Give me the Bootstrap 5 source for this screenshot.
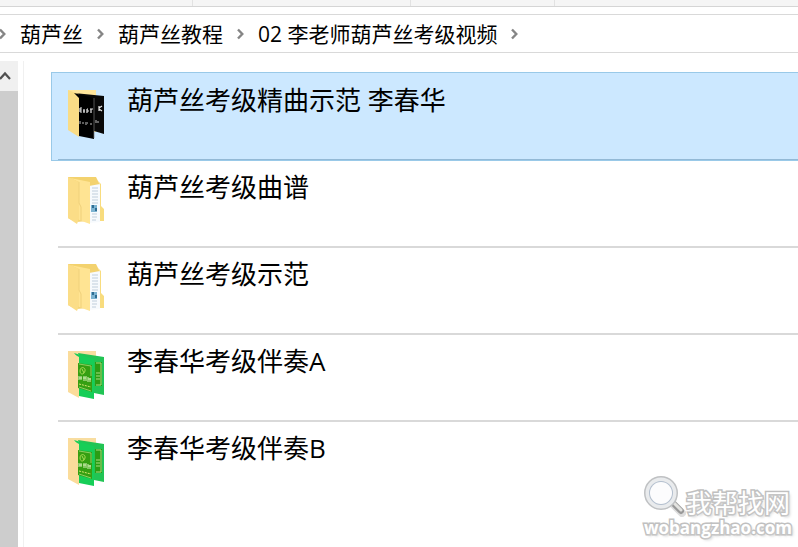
<!DOCTYPE html>
<html lang="zh-CN">
<head>
<meta charset="utf-8">
<meta name="viewport" content="width=device-width, initial-scale=1">
<title>02 李老师葫芦丝考级视频</title>
<link href="https://cdn.jsdelivr.net/npm/bootstrap@5.3.0/dist/css/bootstrap.min.css" rel="stylesheet">
<style>
  body { font-family: "Open Sans", "Noto Sans CJK SC", sans-serif; color: #000; background: #fff; }
  .ribbon { height: 7px; background: #f5f5f5; border-bottom: 1px solid #d5d5d5; }
  .ribbon span { border-right: 1px solid #e2e2e2; }
  .group-a { width: 193px; }
  .group-b { width: 218px; }
  .group-c { width: 144px; }
  .address { margin-top: 7px; height: 39px; gap: 14px; border-top: 1px solid #d9d9d9; border-bottom: 1px solid #d9d9d9; font-size: 21px; line-height: 36px; }
  .address .crumbs { gap: 14px; }
  .address a { color: #000; }
  .scroller { width: 18px; margin-top: 8px; background: #cdcdcd; }
  .scroller button { height: 30px; background: #f0f0f0; }
  .pane-edge { width: 6px; margin-top: 8px; border-right: 1px solid #f0f0f0; }
  .files { margin: 19px 0 0 27px; }
  .entry { padding-left: 7px; }
  .entry-body { height: 87px; padding: 8px 0 0 10px; gap: 21px; border-bottom: 2px solid #d9d9d9; font-size: 26px; line-height: 36px; }
  .entry-body svg { margin-top: 7px; }
  .entry:last-child .entry-body { border-bottom-color: transparent; }
  .entry.selected { background: #cce8ff; border: 1px solid #99c9e8; border-right: 0; padding: 1px 0 0 6px; }
  .entry.selected .entry-body { height: 86px; border-bottom: 1px solid #93b9d6; }
  .brand-mark { right: 6px; bottom: 8px; width: 148px; color: #fff; -webkit-text-stroke: 3px #c0c0c0; paint-order: stroke fill; text-shadow: 2px 2px 3px #ccc; }
  .brand-name { font-family: "Noto Sans CJK SC", sans-serif; font-size: 26px; line-height: 30px; font-weight: 400; }
  .brand-site { font-family: "Open Sans", sans-serif; font-size: 17px; line-height: 22px; font-weight: 700; }
</style>
<script src="https://cdn.jsdelivr.net/npm/bootstrap@5.3.0/dist/js/bootstrap.bundle.min.js"></script>
</head>
<body class="min-vh-100 d-flex flex-column position-relative overflow-hidden">

<svg class="d-none" aria-hidden="true">
  <defs>
    <symbol id="chevron" viewBox="0 0 7 12"><path d="M1 1.5 5.3 6 1 10.5" fill="none" stroke="#858585" stroke-width="2.4"/></symbol>

    <symbol id="folder-black" viewBox="0 0 38 50">
      <path d="M0 1h28v42H12L0 41z" fill="#ffe69c"/>
      <path d="M6 4 36 7v38l-10-3z" fill="#080808"/>
      <path d="M0 1 11 5v43L0 41z" fill="#f9dc86"/>
      <path d="M6 4 26 9v41l-15-3V9z" fill="#000"/>
      <path d="M26 9v40" stroke="#777" stroke-width=".7"/>
      <path d="M12 19v4m0-4h2m-2 2h2m-2 2h2m2-3v4m-1-2h2m2-2v4m0-4h1m-1 2h2m2-2v4m-1-4h3M31 17v5m0-3 3-2m-3 3 3 2" fill="none" stroke="#e8e8e8" stroke-width="1.2"/>
      <path d="M12 32v3m3-2v2m3-2v3m1-2h1m3 0v2m5-5v3m2-2v2" stroke="#bbb"/>
    </symbol>

    <symbol id="folder-docs" viewBox="0 0 38 50">
      <path d="M0 1h28l3 6v37L8 46 0 42z" fill="#f3d26e"/>
      <path d="M21 10 32 8v38l-11 1z" fill="#f7fafd"/>
      <path d="M24 12h6m-6 3h6m-6 3h6m-6 3h6m-6 3h6m-6 3h6m-6 11h5m-5 3h5m-5 3h4" stroke="#c0cedb"/>
      <path d="M23 29h6v7h-6z" fill="#7db4d2"/><path d="M24 29h2v3h-2zm3 3h2v3h-2z" fill="#2f6d93"/>
      <path d="M30 5 33 8v22l3 3v12h-4V9z" fill="#f8dc7e"/>
      <path d="M2 2 22 6v42L11 44V6z" fill="#ffe493"/>
      <path d="M0 1 11 6v37l-2 5-9-6z" fill="#fbdd87"/>
      <path d="M11 6v21l2 4v14" fill="none" stroke="#efd07a"/>
    </symbol>

    <symbol id="folder-green" viewBox="0 0 38 50">
      <path d="M0 1h28v42H12L0 42z" fill="#f8dda0"/>
      <path d="M10 3 36 7v38l-10-2z" fill="#21c454"/>
      <path d="M27 12h7v24h-7z" fill="#2b9d14"/>
      <path d="M28 13h5v22h-5m0-12h4m-4 3h4m-4 3h4" fill="none" stroke="#a8dc80"/>
      <path d="M6 3 26 9v40l-15-3V9z" fill="#16ce57"/>
      <path d="M0 1 11 7v41L0 42z" fill="#fbdc9b"/>
      <path d="M10 13 24 15v27l-14-4z" fill="#359f12"/>
      <path d="m11 14 12 2v10M11 37l12 4" fill="none" stroke="#a3db79" stroke-width=".8"/>
      <path d="M12 21c0-5 6-4 5 0s-5 4-5 0m2-2 2 4" fill="none" stroke="#a9dc55"/>
      <path d="M11 26v4m2-4v4m-2-2h3m2-2v5m2-5v5m-3-3h3m2-1v5m2-4v4m-2-3h3" fill="none" stroke="#d5efb6"/>
      <path d="m11 34 12 3" stroke="#d5e86e" stroke-dasharray="2 1"/>
    </symbol>
  </defs>
</svg>

<div class="ribbon d-flex flex-shrink-0"><span class="group-a"></span><span class="group-b"></span><span class="group-c"></span></div>

<nav class="address d-flex align-items-center flex-shrink-0" aria-label="路径">
  <svg width="6" height="12" viewBox="1 0 6 12" aria-hidden="true"><path d="M1 1.5 5.3 6 1 10.5" fill="none" stroke="#858585" stroke-width="2.4"/></svg>
  <ol class="crumbs list-unstyled d-flex align-items-center text-nowrap mb-0">
    <li><a class="text-decoration-none" href="#">葫芦丝</a></li>
    <li class="d-flex"><svg width="7" height="12" aria-hidden="true"><use href="#chevron"/></svg></li>
    <li><a class="text-decoration-none" href="#">葫芦丝教程</a></li>
    <li class="d-flex"><svg width="7" height="12" aria-hidden="true"><use href="#chevron"/></svg></li>
    <li><a class="text-decoration-none" href="#" aria-current="page">02 李老师葫芦丝考级视频</a></li>
    <li class="d-flex"><svg width="7" height="12" aria-hidden="true"><use href="#chevron"/></svg></li>
  </ol>
</nav>

<div class="d-flex flex-grow-1">
  <div class="scroller flex-shrink-0">
    <button type="button" class="d-flex align-items-center w-100 border-0 p-0" aria-label="向上滚动">
      <svg width="11" height="10" viewBox="0 0 11 10"><path d="M0 8 5 2.5 10 8" fill="none" stroke="#505050" stroke-width="2.2"/></svg>
    </button>
  </div>
  <div class="pane-edge flex-shrink-0"></div>
  <ul class="files list-unstyled flex-grow-1 mb-0">
    <li class="entry selected"><a href="#" class="entry-body d-flex align-items-start text-reset text-decoration-none"><svg width="38" height="50" aria-hidden="true"><use href="#folder-black"/></svg><span>葫芦丝考级精曲示范 李春华</span></a></li>
    <li class="entry"><a href="#" class="entry-body d-flex align-items-start text-reset text-decoration-none"><svg width="38" height="50" aria-hidden="true"><use href="#folder-docs"/></svg><span>葫芦丝考级曲谱</span></a></li>
    <li class="entry"><a href="#" class="entry-body d-flex align-items-start text-reset text-decoration-none"><svg width="38" height="50" aria-hidden="true"><use href="#folder-docs"/></svg><span>葫芦丝考级示范</span></a></li>
    <li class="entry"><a href="#" class="entry-body d-flex align-items-start text-reset text-decoration-none"><svg width="38" height="50" aria-hidden="true"><use href="#folder-green"/></svg><span>李春华考级伴奏A</span></a></li>
    <li class="entry"><a href="#" class="entry-body d-flex align-items-start text-reset text-decoration-none"><svg width="38" height="50" aria-hidden="true"><use href="#folder-green"/></svg><span>李春华考级伴奏B</span></a></li>
  </ul>
</div>

<div class="brand-mark position-absolute text-nowrap">
  <div class="d-flex align-items-end">
    <svg width="42" height="42" viewBox="0 0 42 42" aria-hidden="true">
      <path d="m26 26 12 12" stroke="#ddd" stroke-width="8" stroke-linecap="round"/>
      <path d="m26 25 11 11" stroke="#999" stroke-width="6" stroke-linecap="round"/>
      <path d="m27 25 10 10" stroke="#e3e3e0" stroke-width="3" stroke-linecap="round"/>
      <circle cx="17" cy="18" r="13" fill="#fff" stroke="#bfc1c3" stroke-width="8"/>
      <circle cx="17" cy="18" r="13" fill="none" stroke="#e9ebed" stroke-width="5"/>
      <circle cx="17" cy="18" r="11" fill="#fcfcfd" stroke="#b3bfce" stroke-width="2"/>
    </svg>
    <span class="brand-name">我帮找网</span>
  </div>
  <div class="brand-site">wobangzhao.com</div>
</div>
</body>
</html>
